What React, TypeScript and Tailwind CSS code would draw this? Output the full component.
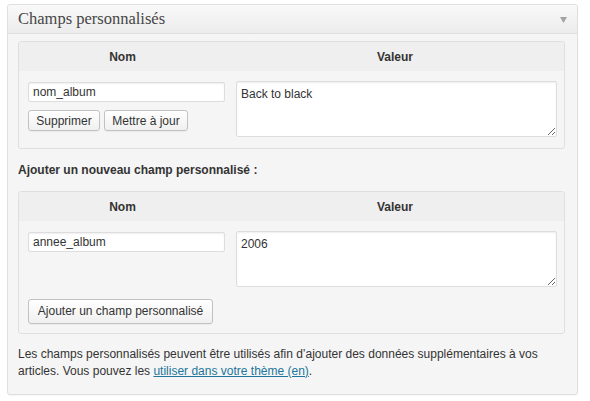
import React from 'react';

type Row = { name: string; value: string };

const inputCls =
  'block w-[197px] h-[20px] border border-[#dddddd] bg-white rounded-[2px] px-[4px] text-[12px] text-[#333] shadow-[inset_0_1px_2px_rgba(0,0,0,0.07)] outline-none';
const areaCls =
  'block w-[321px] h-[56px] border border-[#dddddd] bg-white rounded-[2px] px-[4px] py-[4px] text-[12px] leading-[16px] text-[#333] shadow-[inset_0_1px_2px_rgba(0,0,0,0.07)] outline-none resize-y';
const btnCls =
  'border border-[#c2c2c2] rounded-[3px] bg-gradient-to-b from-white to-[#f0f0f0] text-[12px] text-[#333] shadow-[0_1px_0_rgba(0,0,0,0.04)] leading-none';

const TableHead: React.FC = () => (
  <div className="grid grid-cols-[207px_1fr] h-[29px] bg-[#efefef] rounded-t-[3px] font-bold text-[12px] text-[#333]">
    <div className="flex items-center justify-center">Nom</div>
    <div className="flex items-center justify-center">Valeur</div>
  </div>
);

const CustomFields: React.FC = () => {
  const existing: Row[] = [{ name: 'nom_album', value: 'Back to black' }];

  return (
    <div
      className="ml-[7px] mt-[4px] w-[571px] border border-[#dfdfdf] rounded-[3px] bg-[#f5f5f5] shadow-[0_1px_1px_rgba(0,0,0,0.04)]"
      style={{ fontFamily: '"Liberation Sans", Arial, sans-serif' }}
    >
      <div className="h-[29px] flex items-center justify-between pl-[10px] pr-[10px] border-b border-[#dfdfdf] bg-gradient-to-b from-[#f9f9f9] to-[#ececec] rounded-t-[3px]">
        <h3
          className="text-[16.5px] text-[#464646] leading-none"
          style={{ fontFamily: '"Liberation Serif", "Times New Roman", serif' }}
        >
          Champs personnalisés
        </h3>
        <svg width="7" height="6" viewBox="0 0 7 6" className="mt-[1px]">
          <path d="M0 0h7L3.5 6z" fill="#a3a3a3" />
        </svg>
      </div>

      <div className="pl-[10px] pr-[12px] pt-[7px] pb-[14px]">
        {existing.map(row => (
          <div key={row.name} className="border border-[#dfdfdf] rounded-[3px] bg-[#f5f5f5]">
            <TableHead />
            <div className="grid grid-cols-[207px_1fr] pt-[10px] pb-[11px]">
              <div className="pl-[9px] pt-[1px]">
                <input className={inputCls} defaultValue={row.name} />
                <div className="flex gap-[4px] mt-[8px]">
                  <button className={`${btnCls} w-[72px] h-[21px]`}>Supprimer</button>
                  <button className={`${btnCls} w-[84px] h-[21px]`}>Mettre à jour</button>
                </div>
              </div>
              <div className="pl-[10px]">
                <textarea className={areaCls} defaultValue={row.value} />
              </div>
            </div>
          </div>
        ))}

        <p className="font-bold text-[12px] text-[#333] mt-[13px] mb-[13px] leading-[16px]">
          Ajouter un nouveau champ personnalisé :
        </p>

        <div className="border border-[#dfdfdf] rounded-[3px] bg-[#f5f5f5]">
          <TableHead />
          <div className="grid grid-cols-[207px_1fr] pt-[10px]">
            <div className="pl-[9px] pt-[1px]">
              <input className={inputCls} defaultValue="annee_album" />
            </div>
            <div className="pl-[10px]">
              <textarea className={areaCls} defaultValue="2006" />
            </div>
          </div>
          <div className="pl-[9px] pt-[11px] pb-[9px]">
            <button className={`${btnCls} w-[185px] h-[25px]`}>Ajouter un champ personnalisé</button>
          </div>
        </div>

        <p className="mt-[12px] text-[12px] leading-[17px] text-[#333]">
          Les champs personnalisés peuvent être utilisés afin d’ajouter des données supplémentaires à vos
          articles. Vous pouvez les{' '}
          <a href="#" className="text-[#21759b] underline">
            utiliser dans votre thème (en)
          </a>
          .
        </p>
      </div>
    </div>
  );
};

export default function App() {
  return (
    <div className="w-[590px] h-[401px] bg-white overflow-hidden">
      <CustomFields />
    </div>
  );
}
